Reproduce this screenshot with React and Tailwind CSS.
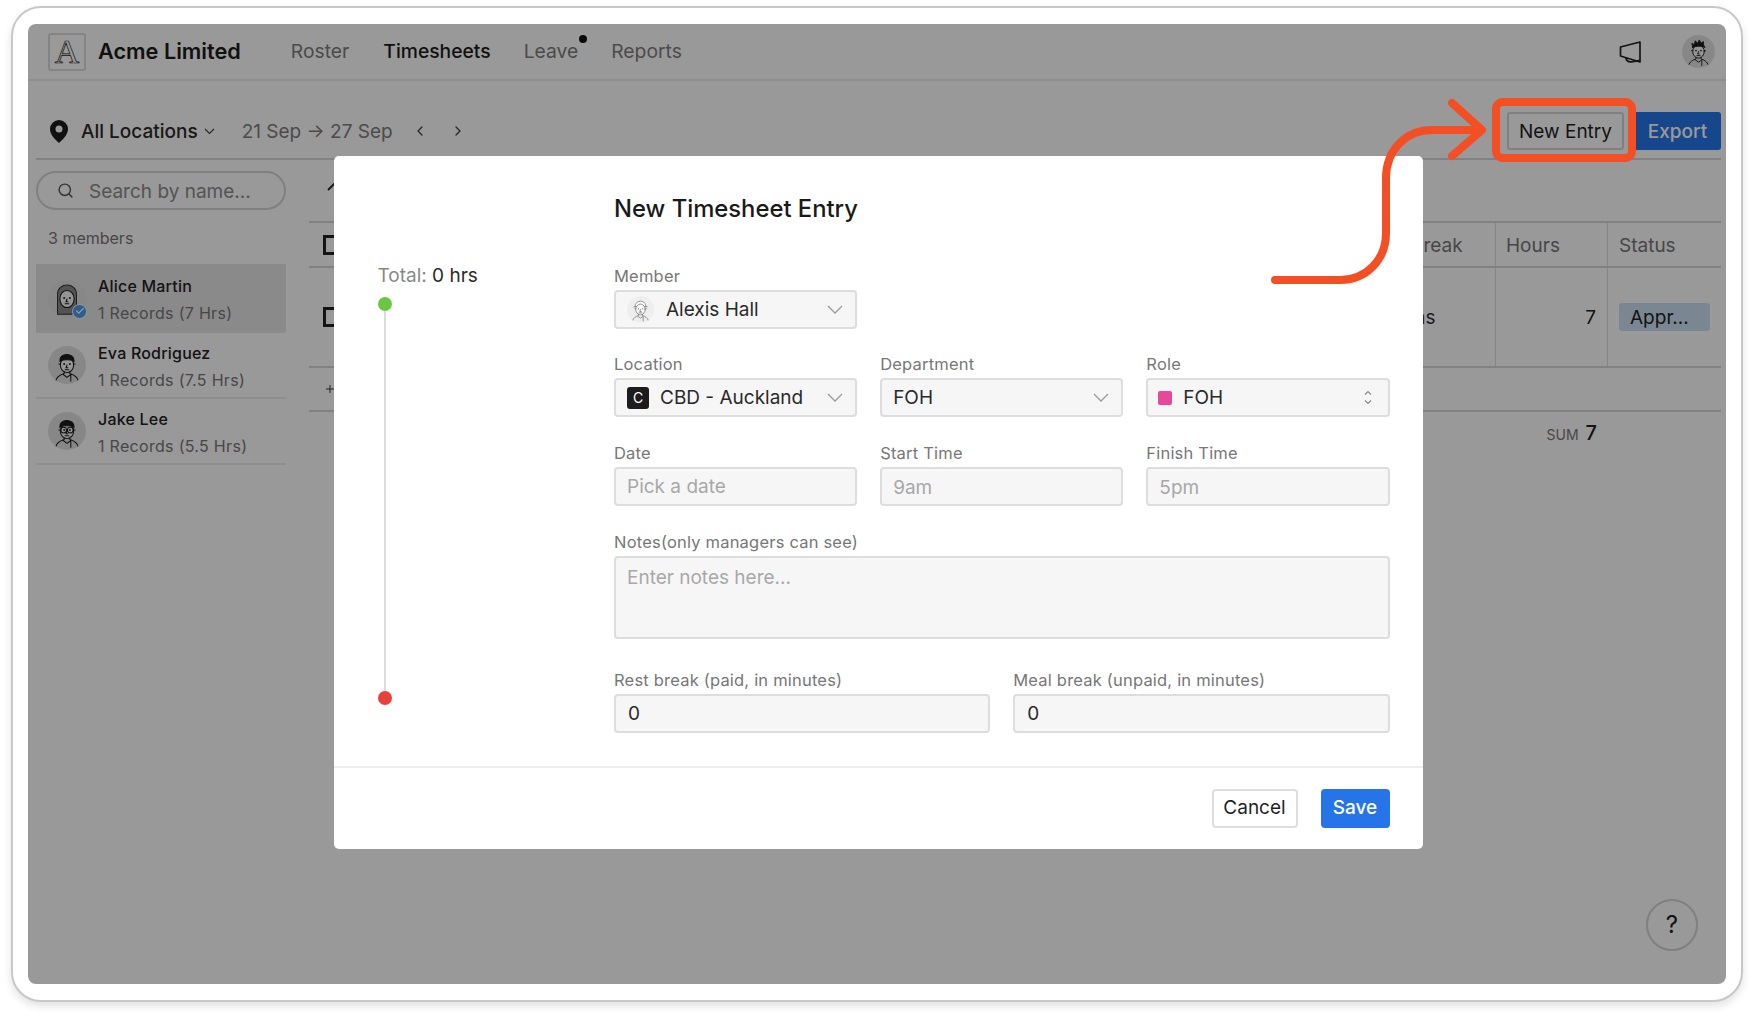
import React from "react";
import { ChevronLeft, ChevronRight, Search, Plus, Check } from "lucide-react";

const members = [
  { name: "Alice Martin", records: "1 Records (7 Hrs)", look: "veil", active: true },
  { name: "Eva Rodriguez", records: "1 Records (7.5 Hrs)", look: "cap" },
  { name: "Jake Lee", records: "1 Records (5.5 Hrs)", look: "glasses" },
];

const Face = ({ look, light }) => {
  const ink = light ? "#777" : "#1c1c1c";
  return (
    <svg viewBox="0 0 40 40" className="h-full w-full" fill="none" stroke={ink} strokeWidth="1.1" strokeLinecap="round">
      {look === "veil" && (
        <path d="M10 36V15C10 2 30 2 30 15v12c0 4-2 7-5 9z" fill="#8a8a8a" stroke="#333" />
      )}
      {look === "hat" && <path d="M12 15c0-10 16-10 16 0zM10 16h20" fill="#fff" />}
      <ellipse cx="20" cy="20" rx={look === "veil" ? 7.5 : 7} ry={look === "veil" ? 9 : 8} fill="#f8f8f8" />
      {look !== "veil" && <path d="M13 19h-1.500M27 19h1.500" />}
      {(look === "cap" || look === "glasses") && (
        <path d="M12.500 16c-1-9 15-10 15 0-4-2-11-2-15 0z" fill={ink} />
      )}
      {look === "spiky" && (
        <path d="M13 15l-1-5 3 2 1-5 3 3 2-4 2 4 3-2 0 4 2 3c-5-2-10-2-15 0z" fill={ink} />
      )}
      <circle cx="17" cy="19" r="1" fill={ink} stroke="none" />
      <circle cx="23" cy="19" r="1" fill={ink} stroke="none" />
      {look === "glasses" && (
        <>
          <circle cx="16.500" cy="19" r="3" />
          <circle cx="23.500" cy="19" r="3" />
        </>
      )}
      <path d="M20 20l-1 3h2M18 25h4" />
      {look !== "veil" && <path d="M8 37c1-5 6-7 9-8v-2M32 37c-1-5-6-7-9-8v-2M16 30l4 3 4-3v7" />}
    </svg>
  );
};

const Avatar = ({ look, className, light }) => (
  <div className={`shrink-0 overflow-hidden rounded-full ${light ? "bg-[#eeeeee]" : "bg-[#e2e2e2]"} ${className}`}>
    <Face look={look} light={light} />
  </div>
);

const SelectChevron = () => (
  <svg width="16" height="9" viewBox="0 0 16 9" fill="none" stroke="#9a9a9a" strokeWidth="1.3" className="ml-auto shrink-0">
    <path d="M1 1l7 7 7-7" />
  </svg>
);

const Label = ({ children }) => (
  <div className="mb-[4px] h-5 whitespace-nowrap text-[16.5px] leading-5 tracking-[0.2px] text-[#777777]">{children}</div>
);

const Box = ({ children, className = "" }) => (
  <div className={`flex h-[39px] items-center rounded-[4px] border-2 border-[#dddddd] bg-[#f6f6f6] text-[19px] text-[#2a2a2a] ${className}`}>
    {children}
  </div>
);

const Modal = () => (
  <div className="w-[1089px] overflow-hidden rounded-[5px] bg-white">
    <div className="flex">
      <div className="flex w-[280.5px] shrink-0 flex-col pb-[61px] pl-[44px] pt-[108px]">
        <div className="text-[19px] leading-6 text-[#888888]">
          Total: <span className="text-[#2a2a2a]">0 hrs</span>
        </div>
        <div className="mt-[9px] h-[14px] w-[14px] rounded-full bg-[#6cc644]" />
        <div className="ml-[6px] w-[2px] flex-1 bg-[#dcdcdc]" />
        <div className="h-[14px] w-[14px] rounded-full bg-[#e8403a]" />
      </div>
      <div className="w-[775.500px] pb-[33.5px] pt-[37px]">
        <h2 className="mb-[40.5px] text-[23.8px] font-medium leading-8 text-[#1a1a1a]">New Timesheet Entry</h2>

        <div className="grid grid-cols-3 gap-x-[23px] gap-y-[25.5px]">
          <div>
            <Label>Member</Label>
            <Box className="pl-[11px] pr-[12px]">
              <Avatar look="hat" light className="h-[27px] w-[27px]" />
              <span className="ml-[12px] pt-[2px]">Alexis Hall</span>
              <SelectChevron />
            </Box>
          </div>
          <div className="col-span-2" />

          <div>
            <Label>Location</Label>
            <Box className="pl-[11px] pr-[12px]">
              <span className="flex h-[22px] w-[22px] shrink-0 items-center justify-center rounded-[3px] bg-[#1c1c1c] text-[14px] text-white">C</span>
              <span className="ml-[11px] whitespace-nowrap pt-[2px]">CBD - Auckland</span>
              <SelectChevron />
            </Box>
          </div>
          <div>
            <Label>Department</Label>
            <Box className="pl-[11px] pr-[12px]">
              <span className="pt-[2px]">FOH</span>
              <SelectChevron />
            </Box>
          </div>
          <div>
            <Label>Role</Label>
            <Box className="pl-[10px] pr-[14px]">
              <span className="h-[14px] w-[14px] rounded-[2px] bg-[#e6499a]" />
              <span className="ml-[11px] pt-[2px]">FOH</span>
              <svg width="10" height="15" viewBox="0 0 10 15" fill="none" stroke="#8a8a8a" strokeWidth="1.2" className="ml-auto mr-[1px]">
                <path d="M2 4.500L5 1.500l3 3M2 10.500l3 3 3-3" />
              </svg>
            </Box>
          </div>

          <div>
            <Label>Date</Label>
            <Box className="px-[11px] pt-[3px] text-[#a8a8a8]">Pick a date</Box>
          </div>
          <div>
            <Label>Start Time</Label>
            <Box className="px-[11px] pt-[5px] text-[#a8a8a8]">9am</Box>
          </div>
          <div>
            <Label>Finish Time</Label>
            <Box className="px-[11px] pt-[5px] text-[#a8a8a8]">5pm</Box>
          </div>
        </div>

        <div className="mt-[26.5px]">
          <Label>Notes(only managers can see)</Label>
          <div className="h-[83px] rounded-[4px] border-2 border-[#dddddd] bg-[#f6f6f6] px-[11px] pt-[8px] text-[19px] leading-6 text-[#a8a8a8]">
            Enter notes here...
          </div>
        </div>

        <div className="mt-[30.5px] grid grid-cols-2 gap-x-[23px]">
          <div>
            <Label>Rest break (paid, in minutes)</Label>
            <Box className="px-[12px] pt-[3px]">0</Box>
          </div>
          <div>
            <Label>Meal break (unpaid, in minutes)</Label>
            <Box className="px-[12px] pt-[3px]">0</Box>
          </div>
        </div>
      </div>
    </div>
    <div className="flex h-[83px] items-start justify-end gap-[23px] border-t-2 border-[#eeeeee] pr-[33px] pt-[21px]">
      <button className="h-[39px] w-[86px] rounded-[4px] border-2 border-[#dddddd] bg-white text-[19px] text-[#1f1f1f]">Cancel</button>
      <button className="h-[39px] w-[69px] rounded-[4px] bg-[#2575e9] text-[19px] font-medium text-white">Save</button>
    </div>
  </div>
);

const Sidebar = () => (
  <aside className="ml-[8px] w-[250px] shrink-0 pt-[11px]">
    <div className="flex h-[39px] items-center rounded-full border-2 border-[#d5d5d5] pl-[19px]">
      <Search size={17} strokeWidth={2} className="text-[#555555]" />
      <span className="ml-[15px] pt-[3px] text-[19px] text-[#8c8c8c]">Search by name...</span>
    </div>
    <div className="mt-[18px] pl-[12px] text-[16px] leading-5 text-[#777777]">3 members</div>
    <div className="mt-[16px]">
      {members.map((m) => (
        <div
          key={m.name}
          className={`flex items-center pl-[12px] ${m.active ? "h-[69px] bg-[#e6e6e6]" : "h-[66px] border-b-2 border-[#ededed]"}`}
        >
          <div className="relative h-[38px] w-[38px] shrink-0">
            <Avatar look={m.look} className="h-[38px] w-[38px]" />
            {m.active && (
              <span className="absolute bottom-[-1px] right-[-1px] flex h-[15px] w-[15px] items-center justify-center rounded-full border border-white bg-[#4a9be8]">
                <Check size={10} strokeWidth={3} className="text-white" />
              </span>
            )}
          </div>
          <div className="ml-[12px] pt-[3px]">
            <div className="text-[16px] font-medium leading-[27px] tracking-[0.2px] text-[#222222]">{m.name}</div>
            <div className="text-[16px] leading-[27px] tracking-[0.3px] text-[#777777]">{m.records}</div>
          </div>
        </div>
      ))}
    </div>
  </aside>
);

const Tick = () => <span className="block h-5 w-5 border-[3px] border-[#222222]" />;

const EntriesTable = () => (
  <div className="ml-[23px] mr-[5px] flex-1">
    <div className="h-[61px] pl-[18px] pt-[23px]">
      <svg width="14" height="8" viewBox="0 0 14 8" fill="none" stroke="#222222" strokeWidth="1.8">
        <path d="M1 7l6-6 6 6" />
      </svg>
    </div>
    <div className="grid grid-cols-[1090px_96px_112px_113px] border-y-2 border-[#d8d8d8] text-[19px]">
      <div className="flex h-[43px] items-center pl-[14px]">
        <Tick />
      </div>
      <div className="flex items-center pl-[12px] pt-[4px] text-[#777777]">Break</div>
      <div className="flex items-center border-l border-[#dedede] pl-[10px] pt-[4px] text-[#777777]">Hours</div>
      <div className="flex items-center border-l border-[#dedede] pl-[11px] pt-[4px] text-[#777777]">Status</div>
    </div>
    <div className="grid grid-cols-[1090px_96px_112px_113px] border-b-2 border-[#d8d8d8] text-[19px]">
      <div className="flex h-[98px] items-center pl-[14px]">
        <Tick />
      </div>
      <div className="ml-[-6px] flex items-center pt-[3px] text-[#333333]">mins</div>
      <div className="flex items-center justify-end border-l border-[#dedede] pr-[11px] pt-[2px] text-[#222222]">7</div>
      <div className="flex items-center border-l border-[#dedede] pl-[11px]">
        <span className="flex h-[28px] w-[91px] items-center rounded-[3px] bg-[#cde0f5] pl-[11px] pt-[2px] text-[#222222]">Appr...</span>
      </div>
    </div>
    <div className="flex h-[44px] items-center border-b-2 border-[#d8d8d8] pl-[15px]">
      <Plus size={12} strokeWidth={2} className="text-[#333333]" />
    </div>
    <div className="flex items-baseline justify-end gap-[7px] pr-[124px] pt-[6px]">
      <span className="text-[14px] text-[#777777]">SUM</span>
      <span className="text-[20px] font-medium text-[#222222]">7</span>
    </div>
  </div>
);

const Workspace = () => (
  <div className="h-full bg-white">
    <header className="flex h-[57px] items-center border-b-2 border-[#ececec] pl-[20px] pr-[11px]">
      <div className="flex h-[38px] w-[38px] items-center justify-center rounded-[3px] border-2 border-[#dcdcdc]">
        <span className="font-['Liberation_Serif',serif] text-[34px] leading-none text-transparent [-webkit-text-stroke:0.7px_#222222]">A</span>
      </div>
      <span className="ml-[12px] text-[21.7px] font-semibold text-[#1c1c1c]">Acme Limited</span>
      <nav className="ml-[50px] flex items-center text-[19.3px] text-[#7d7d7d]">
        <span>Roster</span>
        <span className="ml-[34px] font-medium text-[#1c1c1c]">Timesheets</span>
        <span className="relative ml-[33px]">
          Leave
          <span className="absolute right-[-9px] top-[-2px] h-2 w-2 rounded-full bg-[#111111]" />
        </span>
        <span className="ml-[33px]">Reports</span>
      </nav>
      <svg width="24" height="24" viewBox="0 0 24 24" fill="none" stroke="#222222" strokeWidth="1.7" strokeLinejoin="round" className="ml-auto shrink-0">
        <path d="M1.500 7L21 2v20L1.500 16z" />
        <path d="M6.700 17.500c.6 3 3 4.500 5.500 4.300 3-.2 5.500-.5 8.300-1.600" />
      </svg>
      <Avatar look="spiky" className="ml-[39px] h-[33px] w-[33px]" />
    </header>

    <div className="ml-[8px] mr-[5px] flex h-[79px] items-end border-b-2 border-[#d8d8d8] pb-[8px] pl-[14px]">
      <div className="flex h-[38px] items-center text-[19px]">
        <svg width="18" height="23" viewBox="0 0 18 23" className="shrink-0">
          <path
            fillRule="evenodd"
            fill="#1c1c1c"
            d="M9 0a9 9 0 0 1 9 9c0 5.500-5 10.500-9 14C5 19.500 0 14.500 0 9a9 9 0 0 1 9-9zm0 5.500a3.500 3.500 0 1 0 0 7 3.500 3.500 0 0 0 0-7z"
          />
        </svg>
        <span className="ml-[13px] pt-[2px] font-medium text-[#2a2a2a]">All Locations</span>
        <svg width="11" height="7" viewBox="0 0 11 7" fill="none" stroke="#444444" strokeWidth="1.2" className="ml-[6px]">
          <path d="M1 1l4.500 4.500L10 1" />
        </svg>
        <span className="ml-[27px] pt-[2px] text-[#7d7d7d]">21 Sep → 27 Sep</span>
        <ChevronLeft size={16} strokeWidth={2} className="ml-[19px] text-[#444444]" />
        <ChevronRight size={16} strokeWidth={2} className="ml-[22px] text-[#444444]" />
      </div>
      <button className="ml-auto h-[38px] w-[117px] rounded-[3px] border-2 border-[#d5d5d5] bg-white pt-[2px] text-[19px] text-[#1f1f1f]">
        New Entry
      </button>
      <button className="ml-[10px] h-[38px] w-[87px] rounded-[3px] bg-[#2575e9] pt-[2px] text-[19px] font-medium text-white">
        Export
      </button>
    </div>

    <div className="flex">
      <Sidebar />
      <EntriesTable />
    </div>

    <button className="absolute bottom-[33px] right-[28px] h-[52px] w-[52px] rounded-full border-2 border-[#d5d5d5] bg-white text-[24px] text-[#222222]">
      ?
    </button>
  </div>
);

export default function App() {
  return (
    <div className="relative h-[1016px] w-[1754px] overflow-hidden bg-white pl-[11px] pt-[6px] font-['Inter',sans-serif]">
      <div className="h-[996px] w-[1732px] rounded-[30px] border-2 border-[#c8c8c8] bg-white pl-[15px] pr-[15px] pt-[16px] shadow-[0_4px_8px_rgba(0,0,0,0.12)]">
        <div className="relative h-[960px] w-[1698px] overflow-hidden rounded-[8px]">
          <Workspace />
          <div className="absolute inset-0 flex items-start justify-center bg-black/40 pl-[2px] pt-[132px]">
            <Modal />
          </div>
        </div>
      </div>

      {/* hand drawn callout on top of the screenshot */}
      <svg className="pointer-events-none absolute left-0 top-0" width="1754" height="1016" fill="none" stroke="#f44e24" strokeWidth="8" strokeLinecap="round" strokeLinejoin="round">
        <rect x="1496" y="102" width="136" height="56" rx="7" />
        <path d="M1452 103l30 27-30 26" />
        <path d="M1480 130h-48c-26 0-46 20-46 48v55c0 27-20 47-46 47h-65" />
      </svg>
    </div>
  );
}
